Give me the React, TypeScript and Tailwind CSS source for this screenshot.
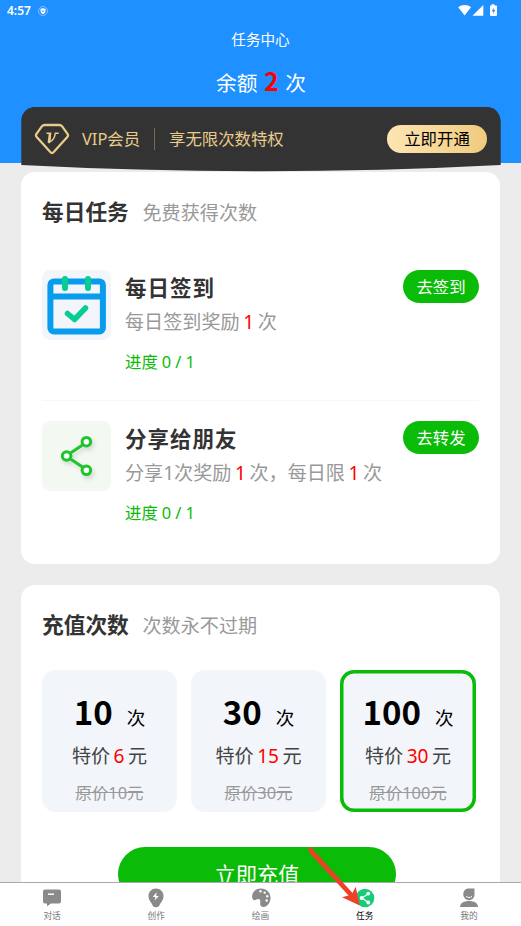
import type { ReactNode } from "react";
import { clsx } from "clsx";

const packages = [
  { count: 10, price: 6, original: 10 },
  { count: 30, price: 15, original: 30 },
  { count: 100, price: 30, original: 100 },
];

function StatusBar() {
  return (
    <div className="flex h-[22px] items-center justify-between pr-[23px] pl-[7px] text-white">
      <div className="flex items-center gap-[7px]">
        <span className="text-[12px] leading-[22px] font-semibold">4:57</span>
        <svg width="10" height="10" viewBox="0 0 10 10" fill="none">
          <circle cx="5" cy="5" r="4.5" stroke="white" strokeOpacity="0.6" strokeWidth="0.7" />
          <path d="M2.5 2.7 5 2.2l2.5.5v2.2C7.5 6.5 6.3 7.5 5 8 3.7 7.5 2.5 6.5 2.5 4.9Z" fill="white" />
          <path d="m4 4.3 1 1.7 1-1.7" stroke="#1e90ff" strokeWidth="0.7" />
        </svg>
      </div>
      <svg className="mb-px" width="40" height="13" viewBox="0 0 40 13" fill="white">
        <path d="M.2 3.3C3.8.3 9.4.3 13 3.300L6.600 11.500Z" />
        <path d="M25.3 1v10.8H14.500Z" />
        <path d="M33.500.3h3v1.200h1.700q.8 0 .8.800v8.800q0 .8-.8.800h-5.400q-.8 0-.8-.8V2.300q0-.8.8-.8h.7Z" />
        <path d="M35.700 3.500v2.600h1.500l-2 3.800V7.200h-1.400Z" fill="#1e90ff" />
      </svg>
    </div>
  );
}

function VipBanner() {
  return (
    <div className="relative mx-[21px] h-16">
      <svg className="absolute inset-0" width="480" height="66" viewBox="0 0 480 66">
        <path d="M.3 58V12Q2 2 12 0H468Q478 2 479.7 13V58Q240 70.5.3 58Z" fill="#333" />
      </svg>
      <div className="relative flex h-16 items-center px-[13px] text-[16.4px] text-[#e9cb8c]">
        <svg width="36" height="32" viewBox="0 0 36 32" fill="none" stroke="#e9cb8c">
          <path
            d="M10.5 2h15q1.500 0 2.500 1.200l5.500 7.600q1.200 1.700-.2 3.200L19.500 29.300q-1.500 1.500-3 0L2.700 14q-1.400-1.500-.2-3.200L8 3.200Q9 2 10.500 2Z"
            strokeWidth="2.3"
          />
          <path d="M12.5 10.200h4l-1 9c3-1.500 5.400-5 5.800-9h3.400" strokeWidth="1.5" />
          <path d="M16 10.200 14.800 20" strokeWidth="2.4" />
        </svg>
        <span className="ml-3 w-[60px] leading-6">VIP会员</span>
        <span className="ml-3 h-[22px] w-px bg-[#786b50]" />
        <span className="ml-[14px] leading-6">享无限次数特权</span>
        <button className="ml-auto h-7 w-[100px] rounded-full bg-linear-to-r from-[#fee5b2] to-[#f0cb7e] text-[16.4px] leading-7 text-black">
          立即开通
        </button>
      </div>
    </div>
  );
}

function CalendarIcon() {
  return (
    <svg className="rounded-lg bg-[#f2f5f9]" width="69" height="70" viewBox="0 0 69 70" fill="none">
      <rect x="8.4" y="11.4" width="52.5" height="50" rx="3.5" stroke="#089cee" strokeWidth="6" />
      <path d="M8 26.400h53" stroke="#089cee" strokeWidth="6" />
      <path d="M23 9v9M46 9v9" stroke="#06cd91" strokeWidth="6" strokeLinecap="round" />
      <path d="m25.500 43.500 7 6L43.500 38" stroke="#06cd91" strokeWidth="5.5" strokeLinecap="round" strokeLinejoin="round" />
    </svg>
  );
}

function ShareIcon() {
  return (
    <svg className="rounded-lg bg-[#f3f8f3]" width="69" height="70" viewBox="0 0 69 70" fill="none">
      <g className="drop-shadow-[2px_3px_2px_rgba(0,0,0,0.12)]" stroke="#1cc52b">
        <path d="m28.500 32 12-8M28.500 38l12 8" strokeWidth="3" />
        <g fill="#f5fcf6" strokeWidth="3">
          <circle cx="44.4" cy="20.7" r="4.3" />
          <circle cx="24.6" cy="35" r="4.3" />
          <circle cx="44.4" cy="49.3" r="4.3" />
        </g>
      </g>
    </svg>
  );
}

function SectionTitle({ title, note }: { title: string; note: string }) {
  return (
    <div className="flex h-8 items-center">
      <h2 className="w-[100.5px] text-[21.7px] leading-8 font-bold text-[#333]">{title}</h2>
      <span className="mt-[2px] text-[19.1px] leading-8 text-[#999]">{note}</span>
    </div>
  );
}

function Num({ children }: { children: ReactNode }) {
  return <span className="text-[#f00]">{children}</span>;
}

type TaskProps = { icon: ReactNode; title: string; action: string; children: ReactNode };

function Task({ icon, title, action, children }: TaskProps) {
  return (
    <div className="flex h-[110px] items-start">
      {icon}
      <div className="ml-[14px] flex-1 whitespace-nowrap">
        <div className="flex justify-between">
          <h3 className="mt-0.5 text-[21.5px] leading-8 font-bold tracking-[1px] text-[#333]">{title}</h3>
          <button className="h-[33px] w-[76px] rounded-full bg-[#0abb07] text-[16.4px] leading-[33px] text-white">
            {action}
          </button>
        </div>
        <p className="mt-1 text-[19.1px] leading-7 [word-spacing:-1.4px] text-[#999]">{children}</p>
        <p className="mt-3 text-[16.4px] leading-7 [word-spacing:-0.2px] text-[#0abb07]">进度 0 / 1</p>
      </div>
    </div>
  );
}

function PackageCard({ count, price, original, active }: (typeof packages)[number] & { active: boolean }) {
  return (
    <div
      className={clsx(
        "flex h-[142px] flex-col items-center rounded-[14px] bg-[#f2f5f9] whitespace-nowrap",
        active ? "w-[136px] shadow-[inset_0_0_0_3.5px_#0abb07]" : "w-[135px]",
      )}
    >
      <div className="mt-[19px] flex h-11 items-baseline gap-[14px] text-black">
        <b className="font-['Noto_Sans_CJK_SC'] text-[33px] leading-11">{count}</b>
        <span className="text-[18.5px]">次</span>
      </div>
      <p className="mt-[9px] text-[19.1px] leading-7 [word-spacing:-1.5px] text-[#444]">
        特价 <Num>{price}</Num> 元
      </p>
      <p className="mt-[11px] text-[16.4px] leading-6 text-[#999] line-through">原价{original}元</p>
    </div>
  );
}

function ChatIcon() {
  return (
    <svg width="20" height="20" viewBox="0 0 20 20" fill="#8a8a8a">
      <path d="M3 1.500h14q2 0 2 2v10q0 2-2 2H9L5 18.300v-2.800H3q-2 0-2-2v-10q0-2 2-2Z" />
      <path d="M6 6.200h6" stroke="white" strokeWidth="1.5" />
    </svg>
  );
}

function CreateIcon() {
  return (
    <svg width="20" height="20" viewBox="0 0 20 20" fill="#8a8a8a">
      <path d="M10 .5c4.300 0 7.500 3.300 7.500 7.500 0 3-1.500 5.500-3.500 8-.5 2-1.700 3.300-4 3.300S6.500 18 6 16C4 13.500 2.500 11 2.500 8 2.500 3.800 5.700.5 10 .5Z" />
      <path d="m10.500 4.300-3.700 4.700h2.600l-.7 3.500L12.800 8h-2.600Z" fill="white" />
    </svg>
  );
}

function PaletteIcon() {
  return (
    <svg width="20" height="20" viewBox="0 0 20 20" fill="#8a8a8a">
      <path d="M10 .5c5.300 0 9.500 4 9.500 9.300 0 5.200-3.500 9.200-7 9.200-2.700 0-3.500-1.500-3.300-3.500.2-2.200.3-4.500-1.700-4.500-2.200 0-3.500 2.200-5.500.5C-.5 8.500 2 .5 10 .5Z" />
      <g fill="white">
        <circle cx="9.500" cy="3.3" r="1.2" />
        <circle cx="13.7" cy="4.6" r="1.2" />
        <circle cx="16.2" cy="8.3" r="1.2" />
        <circle cx="15.7" cy="12.5" r="1.2" />
      </g>
    </svg>
  );
}

function TaskIcon() {
  return (
    <svg width="20" height="20" viewBox="0 0 20 20">
      <circle cx="10" cy="10" r="9.3" fill="#16cc78" />
      <path d="m13 6-6 4 6 4.300" fill="none" stroke="white" strokeWidth="1.2" />
      <g fill="white">
        <circle cx="13.3" cy="5.6" r="1.9" />
        <circle cx="6.6" cy="10" r="1.9" />
        <circle cx="13.3" cy="14.5" r="1.9" />
      </g>
    </svg>
  );
}

function ProfileIcon() {
  return (
    <svg width="20" height="20" viewBox="0 0 20 20" fill="#8a8a8a">
      <path d="M9.500.5h6v6c0 3.500-2.500 5.700-5.500 5.700S4.300 9.700 4.300 6.300 6.500.5 9.500.5Z" />
      <path d="M1 19c0-4 4-6 9-6s9 2 9 6Z" />
      <path d="M7 8.300c1.500 1.600 4.500 1.600 6 0" fill="none" stroke="white" strokeWidth="1" />
    </svg>
  );
}

const tabs = [
  { label: "对话", icon: <ChatIcon /> },
  { label: "创作", icon: <CreateIcon /> },
  { label: "绘画", icon: <PaletteIcon /> },
  { label: "任务", icon: <TaskIcon />, active: true },
  { label: "我的", icon: <ProfileIcon /> },
];

function TabBar() {
  return (
    <nav className="relative flex h-11 shrink-0 border-t border-[#aaa] bg-white">
      {tabs.map((tab) => (
        <div key={tab.label} className="flex flex-1 flex-col items-center pt-[5px]">
          {tab.icon}
          <span className={clsx("text-[8.7px] leading-4", tab.active ? "text-black" : "text-[#777]")}>
            {tab.label}
          </span>
        </div>
      ))}
      <svg className="absolute -top-9 left-[306px]" width="56" height="62" viewBox="0 0 56 62" fill="#ee4128">
        <path d="M3.200.8q1.200-1 2.400.2L46.500 46l3.200-6.300 4 18.800L36 50.300l6.500-1.800L2.800 5Q1.600 3 3.200.8Z" />
      </svg>
    </nav>
  );
}

export default function App() {
  return (
    <div className="flex h-[926px] w-[521px] flex-col overflow-hidden bg-[#ececec] font-['Noto_Sans','Noto_Sans_CJK_SC',sans-serif]">
      <header className="h-[163px] shrink-0 bg-[#1e90ff] text-white">
        <StatusBar />
        <h1 className="h-[34px] text-center text-[14.6px] leading-[34px]">任务中心</h1>
        <p className="h-[51px] pl-px text-center text-[20.8px] leading-[54px] [word-spacing:1px]">
          余额 <b className="font-['Noto_Sans_CJK_SC'] text-[25px] leading-none text-[#f00]">2</b> 次
        </p>
        <VipBanner />
      </header>
      <main className="min-h-0 flex-1 overflow-hidden px-[21px] pt-[9px]">
        <section className="h-[392px] rounded-[14px] bg-white px-[21px] pt-6">
          <SectionTitle title="每日任务" note="免费获得次数" />
          <div className="mt-[42px] border-b border-[#f7f7f7] pb-5">
            <Task icon={<CalendarIcon />} title="每日签到" action="去签到">
              每日签到奖励 <Num>1</Num> 次
            </Task>
          </div>
          <div className="mt-5">
            <Task icon={<ShareIcon />} title="分享给朋友" action="去转发">
              分享1次奖励 <Num>1</Num> 次，每日限 <Num>1</Num> 次
            </Task>
          </div>
        </section>
        <section className="mt-[21px] h-[360px] rounded-[14px] bg-white px-[21px] pt-6">
          <SectionTitle title="充值次数" note="次数永不过期" />
          <div className="mt-[29px] flex gap-[14px]">
            {packages.map((item) => (
              <PackageCard key={item.count} {...item} active={item.count === 100} />
            ))}
          </div>
          <button className="mt-[35px] ml-[76px] block h-[54px] w-[278px] rounded-full bg-[#0abb07] text-[21.3px] leading-[56px] text-white">
            立即充值
          </button>
        </section>
      </main>
      <TabBar />
    </div>
  );
}
